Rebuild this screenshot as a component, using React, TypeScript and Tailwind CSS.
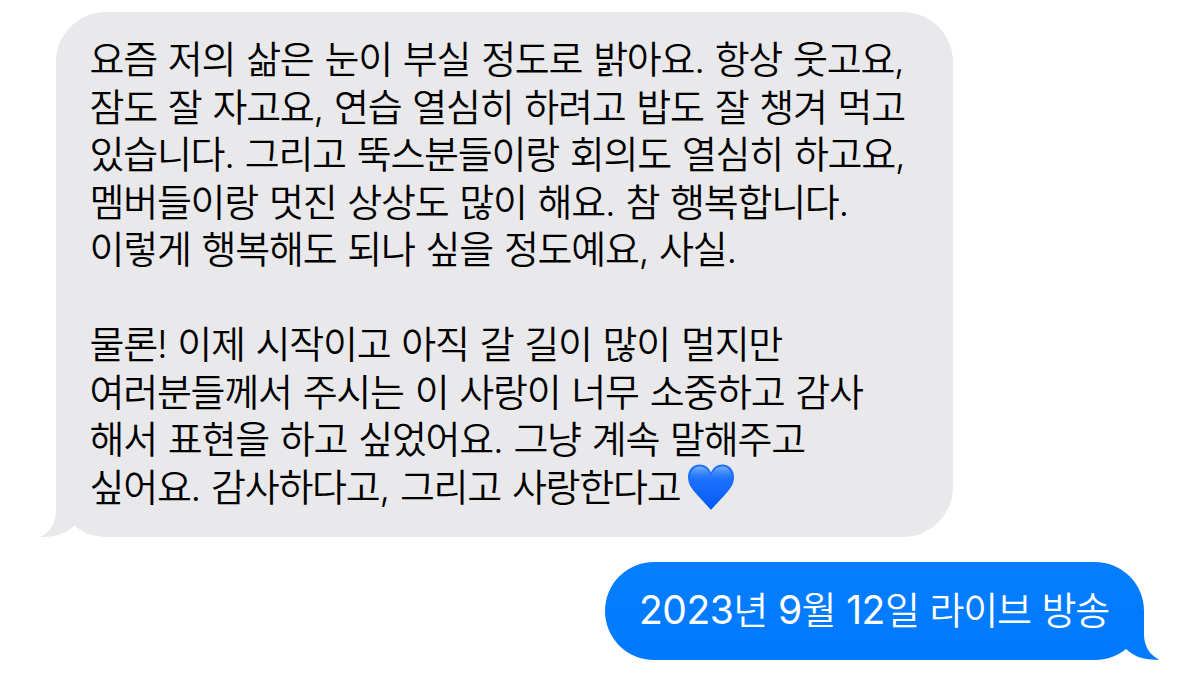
import React, { FC } from "react";

const received: string[] = [
  "요즘 저의 삶은 눈이 부실 정도로 밝아요. 항상 웃고요,",
  "잠도 잘 자고요, 연습 열심히 하려고 밥도 잘 챙겨 먹고",
  "있습니다. 그리고 뚝스분들이랑 회의도 열심히 하고요,",
  "멤버들이랑 멋진 상상도 많이 해요. 참 행복합니다.",
  "이렇게 행복해도 되나 싶을 정도예요, 사실.",
  "",
  "물론! 이제 시작이고 아직 갈 길이 많이 멀지만",
  "여러분들께서 주시는 이 사랑이 너무 소중하고 감사",
  "해서 표현을 하고 싶었어요. 그냥 계속 말해주고",
  "싶어요. 감사하다고, 그리고 사랑한다고",
];

const Heart: FC = () => (
  <svg className="ml-[7px] h-[48px] w-[48px] shrink-0" viewBox="0 0 48 48">
    <defs>
      <linearGradient id="heart" x1="0" y1="0" x2="0" y2="1">
        <stop offset="0" stopColor="#1f72f5" />
        <stop offset="0.4" stopColor="#1a6fff" />
        <stop offset="1" stopColor="#0557f2" />
      </linearGradient>
      <linearGradient id="shine" x1="0" y1="0" x2="0" y2="1">
        <stop offset="0" stopColor="#8cc0ff" stopOpacity="0.8" />
        <stop offset="1" stopColor="#4a90ff" stopOpacity="0" />
      </linearGradient>
    </defs>
    <path
      d="M24 47C22 44.500 16 38.500 9 30.500C4 25 1 20.500 1 14C1 6.500 6 1.500 12.500 1.500C18 1.500 22 4.500 24 9.500C26 4.500 30 1.500 35.500 1.500C42 1.500 47 6.500 47 14C47 20.500 44 25 39 30.500C32 38.500 26 44.500 24 47Z"
      fill="url(#heart)"
    />
    <path
      d="M3.500 17C2.500 8 7 3.500 12.500 3.500C18 3.500 21.500 7 24 13C26.500 7 30 3.500 35.500 3.500C41 3.500 45.500 8 44.500 17Z"
      fill="url(#shine)"
    />
  </svg>
);

// digits keep a wider pitch than the hangul around them
const Num: FC<{ children: React.ReactNode }> = ({ children }) => (
  <span className="text-[39px] font-normal tracking-[-0.5px]">{children}</span>
);

const App: FC = () => {
  return (
    <div className="h-[673px] w-[1200px] overflow-hidden bg-white pt-3 font-['Inter','Noto_Sans_CJK_KR',sans-serif] text-[38px] font-[350] tracking-[-1.26px] [word-spacing:1.5px]">
      {/* received */}
      <div className="relative ml-14 h-[525px] w-[896.5px] rounded-[50px] bg-[#e9e9eb] pt-[24px] pl-[33.5px] leading-[47.5px] text-black">
        <svg
          className="absolute -bottom-px -left-4 h-[52px] w-[66px]"
          viewBox="0 0 66 52"
        >
          <path
            d="M16 0V24C16 37 10 46 0.700 51C15 51.500 25 48 33.700 40.300L60 20V0Z"
            fill="#e9e9eb"
          />
        </svg>
        {received.map((line, i) => (
          <div
            key={i}
            className="relative flex h-[47.5px] items-center whitespace-nowrap"
          >
            <p>{line}</p>
            {i === received.length - 1 && <Heart />}
          </div>
        ))}
      </div>

      {/* sent */}
      <div className="relative mt-[25px] ml-[605px] h-[98px] w-[539px] rounded-[49px] bg-linear-to-b from-[#067eff] to-[#0079ff] pl-[34px] leading-[96px] whitespace-nowrap text-white">
        <svg
          className="absolute -right-4 bottom-0 h-[50px] w-[66px]"
          viewBox="0 0 66 50"
        >
          <path
            d="M50 0V24C50 37 56 45 65.300 49.700C51 50.500 41 47 32.300 39.300L6 20V0Z"
            fill="#007aff"
          />
        </svg>
        <p className="relative">
          <Num>2023</Num>년 <Num>9</Num>월 <Num>12</Num>일 라이브 방송
        </p>
      </div>
    </div>
  );
};

export default App;
